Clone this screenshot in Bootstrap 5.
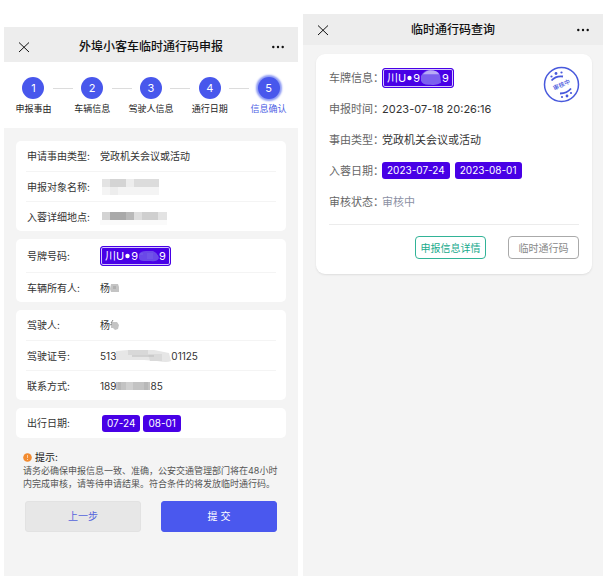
<!DOCTYPE html>
<html lang="zh-CN">
<head>
<meta charset="utf-8">
<meta name="viewport" content="width=device-width, initial-scale=1">
<title>外埠小客车临时通行码申报</title>
<link href="https://cdn.jsdelivr.net/npm/bootstrap@5.3.0/dist/css/bootstrap.min.css" rel="stylesheet">
<style>
  body { font-family: Inter, "Noto Sans CJK SC", sans-serif; font-size: 10px; line-height: 14px; color: #333; background: #fff; }
  .screens { gap: 5px; padding: 14px 0 7px 4px; }
  .screen { background: #f4f4f4; min-width: 0; }
  .screen-apply { flex: 294 1 0; margin-top: 13px; }
  .screen-query { flex: 300 1 0; }
  .topbar { background: #ededed; color: #111; padding: 0 14px; }
  .topbar-tall { height: 35px; padding-top: 4px; }
  .topbar-short { height: 31px; }
  .topbar h1 { font-size: 12px; line-height: 16px; font-weight: 500; }
  .plain-btn { border: 0; background: none; padding: 0; display: flex; color: #111; }

  .steps { background: #fff; padding: 15px 0 12px; height: 66px; }
  .step-item { flex: 1 1 0; position: relative; font-size: 9px; line-height: 12px; color: #222; white-space: nowrap; }
  .step-item + .step-item::before { content: ""; position: absolute; top: 11px; left: -10px; width: 20px; height: 1px; background: #dcdcdc; }
  .step-dot { width: 22px; height: 22px; border-radius: 50%; background: #4857ec; color: #fff; font-size: 11px; margin-bottom: 4px; }
  .step-current { color: #4a5ce4; }
  .step-current .step-dot { box-shadow: 0 0 2px 2px #8c99f4; }

  .groups { padding: 13px 12px 0; gap: 8px; }
  .group-box { background: #fff; border-radius: 5px; padding: 0 10px; }
  .field-row { height: 30px; color: #333; }
  .field-row + .field-row { border-top: 1px solid #f4f4f4; }
  .field-plate { height: 33px; }
  .field-row dt { width: 74px; font-weight: 400; padding-left: 1px; }
  .plate { background: #4800e6; color: #fff; border: 1px solid #4800e6; box-shadow: inset 0 0 0 1px #d3c8fb; border-radius: 3px; height: 20px; padding: 0 4px; font-size: 11px; white-space: nowrap; }
  .date-set { gap: 3px; }
  .date-set-wide { gap: 5px; }
  .date-indent { padding-left: 2px; }
  .date-tag { background: #4800e6; color: #fff; border-radius: 3px; padding: 1px 5px; font-size: 10px; line-height: 15px; white-space: nowrap; }

  .tips { padding: 12px 18px 0 19px; font-size: 9px; line-height: 13px; color: #555; white-space: nowrap; }
  .tips h2 { font-size: 10px; line-height: 14px; font-weight: 400; color: #222; gap: 3px; }
  .actions { padding: 11px 21px 0; gap: 20px; }
  .actions .btn { height: 31px; padding: 0; font-size: 10px; border-radius: 3px; }
  .btn-prev, .btn-prev:hover { background: #e7e7e7; border-color: #e2e2e2; color: #5565dc; }
  .btn-send, .btn-send:hover { background: #4a58ee; border-color: #4a58ee; color: #fff; }

  .record { background: #fff; border-radius: 9px; margin: 9px 11px 0 13px; padding: 8px 13px 15px; box-shadow: 0 1px 2px #dedede; position: relative; }
  .record-row { height: 31px; font-size: 11px; line-height: 16px; color: #333; }
  .record-row dt { width: 53px; font-weight: 400; font-size: 11px; color: #666; white-space: nowrap; }
  .muted-state { color: #8c90a4; }
  .stamp { position: absolute; top: 12px; right: 12px; }
  .record-foot { border-top: 1px solid #ececec; margin-top: 7px; padding-top: 11px; gap: 22px; }
  .record-foot .btn { width: 71px; height: 23px; padding: 0; font-size: 10px; line-height: 14px; border-radius: 4px; white-space: nowrap; background: #fff; }
  .btn-detail, .btn-detail:hover { border-color: #32b397; color: #18aa8c; }
  .btn-pass, .btn-pass:hover { border-color: #aaa; color: #888; }
</style>
<script src="https://cdn.jsdelivr.net/npm/bootstrap@5.3.0/dist/js/bootstrap.bundle.min.js"></script>
</head>
<body>
<div class="screens d-flex min-vh-100">

  <main class="screen screen-apply">
    <header class="topbar topbar-tall d-flex align-items-center justify-content-between">
      <button type="button" class="plain-btn" aria-label="关闭"><svg width="12" height="12" viewBox="0 0 12 12" fill="none" stroke="currentColor"><path d="M1 1.5 11 11M11 1.5 1 11"/></svg></button>
      <h1 class="m-0">外埠小客车临时通行码申报</h1>
      <button type="button" class="plain-btn" aria-label="更多"><svg width="12" height="4" viewBox="0 0 12 4" fill="currentColor"><circle cx="1.3" cy="2" r="1.2"/><circle cx="6" cy="2" r="1.2"/><circle cx="10.7" cy="2" r="1.2"/></svg></button>
    </header>

    <ol class="steps list-unstyled d-flex m-0">
      <li class="step-item d-flex flex-column align-items-center"><span class="step-dot d-flex align-items-center justify-content-center">1</span>申报事由</li>
      <li class="step-item d-flex flex-column align-items-center"><span class="step-dot d-flex align-items-center justify-content-center">2</span>车辆信息</li>
      <li class="step-item d-flex flex-column align-items-center"><span class="step-dot d-flex align-items-center justify-content-center">3</span>驾驶人信息</li>
      <li class="step-item d-flex flex-column align-items-center"><span class="step-dot d-flex align-items-center justify-content-center">4</span>通行日期</li>
      <li class="step-item step-current d-flex flex-column align-items-center" aria-current="step"><span class="step-dot d-flex align-items-center justify-content-center">5</span>信息确认</li>
    </ol>

    <div class="groups d-flex flex-column">
      <dl class="group-box m-0">
        <div class="field-row d-flex align-items-center"><dt>申请事由类型:</dt><dd class="m-0">党政机关会议或活动</dd></div>
        <div class="field-row d-flex align-items-center"><dt>申报对象名称:</dt><dd class="m-0 d-flex">
          <svg width="60" height="16" viewBox="0 0 60 16" shape-rendering="crispEdges"><path fill="#e3e3e3" d="M2 0h8v8H2z"/><path fill="#d4d4d4" d="M10 0h16v8H10z"/><path fill="#ededed" d="M26 0h8v8h-8z"/><path fill="#dcdcdc" d="M34 0h25v8H34z"/><path fill="#f4f4f4" d="M2 8h57v8H2z"/><path fill="#ededed" d="M10 8h8v8h-8z"/></svg>
        </dd></div>
        <div class="field-row d-flex align-items-center"><dt>入蓉详细地点:</dt><dd class="m-0 d-flex">
          <svg width="70" height="16" viewBox="0 0 70 16" shape-rendering="crispEdges"><path fill="#d3d3d3" d="M2 3h8v8H2z"/><path fill="#a9a9a9" d="M10 3h16v8H10z"/><path fill="#b9b9b9" d="M26 3h8v8h-8z"/><path fill="#dedede" d="M34 3h8v8h-8z"/><path fill="#cfcfcf" d="M42 3h16v8H42z"/><path fill="#e3e3e3" d="M58 3h9v8h-9z"/><path fill="#fafafa" d="M0 11h67v5H0z"/></svg>
        </dd></div>
      </dl>

      <dl class="group-box m-0">
        <div class="field-row field-plate d-flex align-items-center"><dt>号牌号码:</dt><dd class="m-0">
          <span class="plate d-flex align-items-center">川U<svg width="7" height="6" viewBox="0 0 7 6"><circle cx="3.5" cy="3" r="2.2" fill="#fff"/></svg>9<svg width="21" height="12" viewBox="0 0 21 12"><path d="M1 4Q3 1 8 1h7q5 2 6 7-2 4-8 3H6Q1 11 1 8z" fill="#6a48e8"/><path d="M2 3h3v2H2zM9 3h6v6H9z" fill="#7053e9"/></svg>9</span>
        </dd></div>
        <div class="field-row d-flex align-items-center"><dt>车辆所有人:</dt><dd class="m-0 d-flex align-items-center">杨<svg width="9" height="10" viewBox="0 0 9 10"><path d="M1 1h7l1 3v5H1L0 6z" fill="#c4c4c4"/><path d="M3 3h3v3H3z" fill="#b0b0b0"/></svg></dd></div>
      </dl>

      <dl class="group-box m-0">
        <div class="field-row d-flex align-items-center"><dt>驾驶人:</dt><dd class="m-0 d-flex align-items-center">杨<svg width="9" height="10" viewBox="0 0 9 10"><path d="M3 0 1 3M2 2v6M0 5l2-1" stroke="#888" fill="none"/><path d="M3 2h4l2 3-1 4-3 1-3-3z" fill="#c4c4c4"/></svg></dd></div>
        <div class="field-row d-flex align-items-center"><dt>驾驶证号:</dt><dd class="m-0 d-flex align-items-center">513<svg width="55" height="14" viewBox="0 0 55 14"><path d="M0 2 12 1h26l15 3 2 8q-4 2-14 0l-13-1H0z" fill="#e6e6e6"/><path d="M12 1h20v5H12z" fill="#d8d8d8"/><path d="M32 5h14v7H34z" fill="#dadada"/><path d="M16 7h22" stroke="#bbb"/></svg>01125</dd></div>
        <div class="field-row d-flex align-items-center"><dt>联系方式:</dt><dd class="m-0 d-flex align-items-center">189<svg width="34" height="8" viewBox="0 0 34 8" shape-rendering="crispEdges"><path fill="#c3c3c3" d="M0 0h34v8H0z"/><path fill="#d0d0d0" d="M10 0h7v8h-7z"/><path fill="#b8b8b8" d="M2 0h3v8H2zM28 0h4v8h-4z"/></svg>85</dd></div>
      </dl>

      <dl class="group-box m-0">
        <div class="field-row d-flex align-items-center"><dt>出行日期:</dt><dd class="m-0 d-flex date-set date-indent"><span class="date-tag">07-24</span><span class="date-tag">08-01</span></dd></div>
      </dl>
    </div>

    <section class="tips">
      <h2 class="m-0 d-flex align-items-center"><svg width="9" height="9" viewBox="0 0 9 9"><circle cx="4.5" cy="4.5" r="4.3" fill="#f28b30"/><path d="M4.500 2v3M4.500 6v1" stroke="#fbd0a8"/></svg>提示:</h2>
      <p class="m-0">请务必确保申报信息一致、准确，公安交通管理部门将在48小时<br>内完成审核，请等待申请结果。符合条件的将发放临时通行码。</p>
    </section>

    <div class="actions d-flex">
      <button type="button" class="btn btn-prev flex-fill w-50">上一步</button>
      <button type="button" class="btn btn-send flex-fill w-50">提 交</button>
    </div>
  </main>

  <section class="screen screen-query">
    <header class="topbar topbar-short d-flex align-items-center justify-content-between">
      <button type="button" class="plain-btn" aria-label="关闭"><svg width="12" height="12" viewBox="0 0 12 12" fill="none" stroke="currentColor"><path d="M1 1.5 11 11M11 1.5 1 11"/></svg></button>
      <h1 class="m-0">临时通行码查询</h1>
      <button type="button" class="plain-btn" aria-label="更多"><svg width="12" height="4" viewBox="0 0 12 4" fill="currentColor"><circle cx="1.3" cy="2" r="1.2"/><circle cx="6" cy="2" r="1.2"/><circle cx="10.7" cy="2" r="1.2"/></svg></button>
    </header>

    <article class="record">
      <svg class="stamp" width="37" height="37" viewBox="0 0 37 37" fill="none" stroke="#4859dc">
        <circle cx="18.5" cy="18.5" r="17" stroke-width="1.5"/>
        <path d="M8.500 14.500Q13 9.500 20 10.500M17 27.500q7 0 11-5" stroke-width="1.8"/>
        <g fill="#4859dc" stroke="none"><circle cx="8.5" cy="10.5" r="1.1"/><circle cx="13" cy="7.5" r="1.4"/><circle cx="18.5" cy="6.5" r="1.1"/><circle cx="19" cy="31" r="1.1"/><circle cx="24" cy="30" r="1.4"/><circle cx="28" cy="27" r="1.1"/>
        <text x="18.5" y="21" font-size="6" font-weight="500" text-anchor="middle" transform="rotate(-24 18.5 18.5)">审核中</text></g>
      </svg>
      <dl class="m-0">
        <div class="record-row d-flex align-items-center"><dt>车牌信息：</dt><dd class="m-0">
          <span class="plate d-flex align-items-center">川U<svg width="7" height="6" viewBox="0 0 7 6"><circle cx="3.5" cy="3" r="2.2" fill="#fff"/></svg>9<svg width="22" height="18" viewBox="0 0 23 18"><path d="M1 7Q4 1 10 1q9 0 11 5l1 8q-4 3-11 2-8 1-10-4z" fill="#7c60ee"/><path d="M3 5q4-4 8-4 7 0 9 4z" fill="#b8aaf6"/></svg>9</span>
        </dd></div>
        <div class="record-row d-flex align-items-center"><dt>申报时间：</dt><dd class="m-0">2023-07-18 20:26:16</dd></div>
        <div class="record-row d-flex align-items-center"><dt>事由类型：</dt><dd class="m-0">党政机关会议或活动</dd></div>
        <div class="record-row d-flex align-items-center"><dt>入蓉日期：</dt><dd class="m-0 d-flex date-set-wide"><span class="date-tag">2023-07-24</span><span class="date-tag">2023-08-01</span></dd></div>
        <div class="record-row d-flex align-items-center"><dt>审核状态：</dt><dd class="m-0 muted-state">审核中</dd></div>
      </dl>
      <div class="record-foot d-flex justify-content-end">
        <button type="button" class="btn btn-detail">申报信息详情</button>
        <button type="button" class="btn btn-pass">临时通行码</button>
      </div>
    </article>
  </section>

</div>
</body>
</html>
